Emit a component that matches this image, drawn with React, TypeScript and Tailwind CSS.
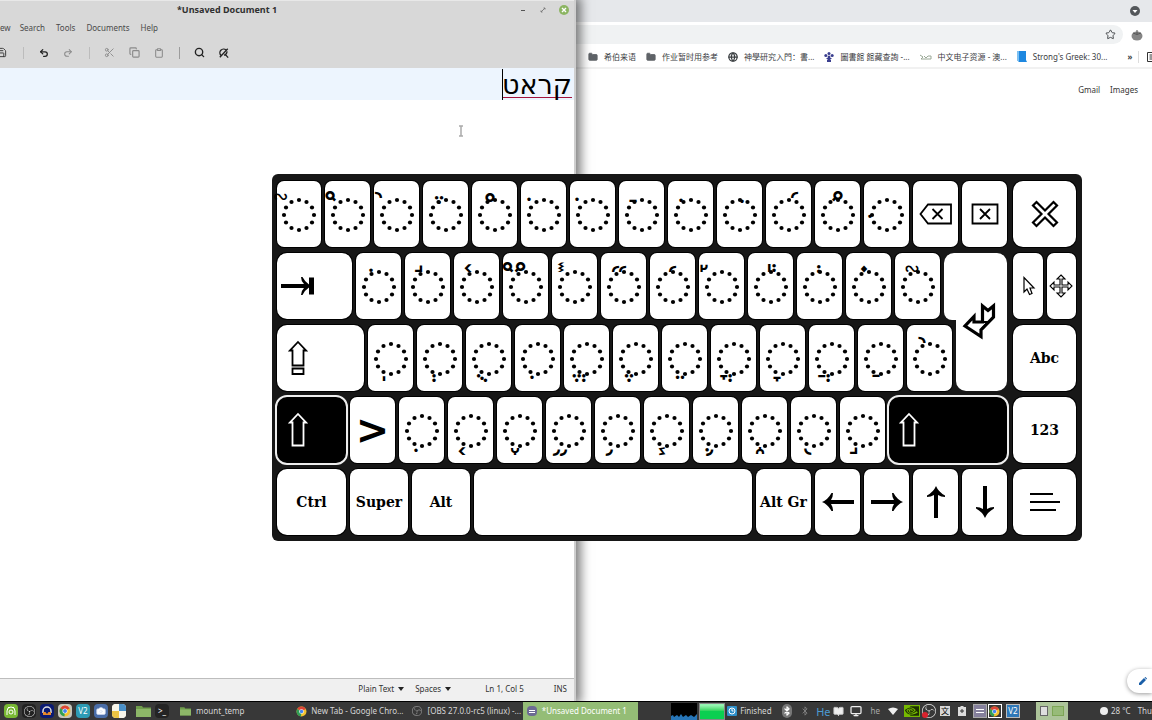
import type { ReactNode } from 'react';
import { SiNvidia, SiObsstudio } from 'react-icons/si';
import {
  Bluetooth,
  BookOpen,
  Camera,
  Clipboard,
  Copy,
  Folder,
  Globe,
  Monitor,
  Redo2,
  Save,
  Scissors,
  Search,
  Star,
  Undo2,
} from 'lucide-react';

type Mark = [char: string, x: number, y: number, name: string];

/* Mark positions are baseline coordinates inside a 44 x 66 key drawing. */
const NUMBER_ROW: Mark[] = [
  ['\u05AE', 16, 48, 'Zinor'],
  ['\u05A9', 16, 49, 'Telisha qetana'],
  ['\u0599', 13, 46, 'Pashta'],
  ['\u0592', 16, 52, 'Segolta'],
  ['\u05AF', 23, 51, 'Masora circle'],
  ['\u05C2', 13, 51, 'Sin dot'],
  ['\u05B9', 12, 51, 'Holam'],
  ['\u05BF', 19, 53, 'Rafe'],
  ['\u05BA', 18, 52, 'Holam haser'],
  ['\u05C1', 30, 53, 'Shin dot'],
  ['\u059D', 30, 46, 'Geresh muqdam'],
  ['\u05A0', 22, 49, 'Telisha gedola'],
  ['\u05BC', 11, 50, 'Dagesh'],
];

const TOP_ROW: Mark[] = [
  ['\u05C4', 20, 53, 'Upper dot'],
  ['\u05AC', 19, 48, 'Iluy'],
  ['\u05AB', 19, 48, 'Ole'],
  ['\u059F', 16, 48, 'Qarney para'],
  ['\u0593', 14, 48, 'Shalshelet'],
  ['\u059E', 23, 48, 'Gershayim'],
  ['\u059C', 24, 48, 'Geresh'],
  ['\u05A1', 10, 48, 'Pazer'],
  ['\u0595', 23, 48, 'Zaqef gadol'],
  ['\u0594', 23, 49, 'Zaqef qatan'],
  ['\u0597', 23, 49, 'Revia'],
  ['\u0598', 22, 48, 'Zarqa'],
];

const HOME_ROW: Mark[] = [
  ['\u05BD', 21, 49, 'Meteg'],
  ['\u05B0', 22, 49, 'Sheva'],
  ['\u05BB', 21, 49, 'Qubuts'],
  ['\u05B4', 22, 47, 'Hiriq'],
  ['\u05B1', 20, 49, 'Hataf segol'],
  ['\u05B6', 21, 49, 'Segol'],
  ['\u05B5', 23, 47, 'Tsere'],
  ['\u05B3', 20, 49, 'Hataf qamats'],
  ['\u05B8', 22, 49, 'Qamats'],
  ['\u05B2', 20, 49, 'Hataf patah'],
  ['\u05B7', 23, 47, 'Patah'],
  ['\u05A8', 20, 47, 'Qadma'],
];

const BOTTOM_ROW: Mark[] = [
  ['\u05C5', 22, 46, 'Lower dot'],
  ['\u05A4', 19, 50, 'Mahapakh'],
  ['\u05A2', 23, 50, 'Atnah hafukh'],
  ['\u05A6', 19, 51, 'Merkha kefula'],
  ['\u05A5', 19, 51, 'Merkha'],
  ['\u05A7', 23, 50, 'Darga'],
  ['\u059B', 22, 51, 'Tevir'],
  ['\u0591', 23, 49, 'Etnahta'],
  ['\u0596', 22, 50, 'Tipeha'],
  ['\u05A3', 19, 50, 'Munah'],
];

const RING = Array.from({ length: 12 }, (_, i) => {
  const angle = (i * Math.PI) / 6;
  return { cx: 22 + 15 * Math.sin(angle), cy: 34 - 15 * Math.cos(angle) };
});

function Key({ label, className, children }: { label: string; className: string; children?: ReactNode }) {
  return (
    <button
      type="button"
      aria-label={label}
      className={`flex h-full shrink-0 items-center justify-center bg-white text-black ring-1 ring-black ${className}`}
    >
      {children}
    </button>
  );
}

function MarkKey({ mark, className = 'w-[45px]' }: { mark: Mark; className?: string }) {
  const [char, x, y, name] = mark;
  return (
    <Key label={name} className={`rounded-[7px] ${className}`}>
      <svg viewBox="0 0 44 66" className="h-[66px] w-11 shrink-0 overflow-visible">
        {RING.map(({ cx, cy }, i) => (
          <circle key={i} cx={cx} cy={cy} r="2.100" />
        ))}
        <text x={x} y={y} textAnchor="middle" className="font-['Liberation_Sans',sans-serif] text-[44px]">
          {'\u00A0' + char}
        </text>
      </svg>
    </Key>
  );
}

function ShiftArrow({ className }: { className: string }) {
  return (
    <svg viewBox="0 0 20 36" className={className} fill="none" stroke="currentColor" strokeWidth="1.8">
      <path d="M10 2 18 10.500H15.500V33.500H4.500V10.500H2Z" />
    </svg>
  );
}

function Arrow({ className }: { className: string }) {
  return (
    <svg viewBox="0 0 34 20" className={className} fill="currentColor">
      <path d="M1 8H24Q22 5 22 1H23.500Q27 7.500 33 10Q27 12.500 23.500 19H22Q22 15 24 12H1Z" />
    </svg>
  );
}

function Keyboard() {
  return (
    <section
      aria-label="On-screen keyboard"
      className="absolute top-[174px] left-[272px] z-30 flex gap-1.5 rounded-md bg-[#171717] pt-[7px] pr-1.5 pb-1.5 pl-[5px] font-['DejaVu_Serif',serif] text-sm font-bold"
    >
      <div className="flex w-[730px] flex-col gap-1.5">
        <div className="flex h-[66px] gap-1">
          {NUMBER_ROW.map((mark, i) => (
            <MarkKey key={mark[3]} mark={mark} className={i === 0 ? 'w-11' : 'w-[45px]'} />
          ))}
          <Key label="Backspace" className="w-[45px] rounded-[7px]">
            <svg viewBox="0 0 34 22" className="h-[22px] w-[34px]" fill="none" stroke="black" strokeWidth="1.8">
              <path d="M9 1.500H32V20.500H9L1.500 11Z" />
              <path d="M13.500 6 23.500 16M23.500 6 13.500 16" />
            </svg>
          </Key>
          <Key label="Delete" className="w-[45px] rounded-[7px]">
            <svg viewBox="0 0 28 22" className="h-[22px] w-7" fill="none" stroke="black" strokeWidth="1.8">
              <path d="M1.500 1.500H26.500V20.500H1.500ZM9 6 19 16M19 6 9 16" />
            </svg>
          </Key>
        </div>
        <div className="flex h-[138px]">
          <div className="flex w-[675px] shrink-0 flex-col gap-1.5">
            <div className="flex h-[66px] gap-1">
              <Key label="Tab" className="w-[75px] rounded-[10px]">
                <svg viewBox="0 0 34 20" className="mr-9 h-5 w-[34px]">
                  <path d="M1 8H24Q21 5 21 1H22.500Q25 6 29 8.500V1.500H34V18.500H29V11.500Q25 14 22.500 19H21Q21 15 24 12H1Z" />
                </svg>
              </Key>
              {TOP_ROW.map((mark) => (
                <MarkKey key={mark[3]} mark={mark} />
              ))}
            </div>
            <div className="flex h-[66px] gap-1">
              <Key label="Caps Lock" className="w-[87px] rounded-[10px]">
                <svg viewBox="0 0 20 36" className="mr-[46px] h-9 w-5" fill="none" stroke="black" strokeWidth="1.8">
                  <path d="M10 2 18 10.500H15.500V25.500H4.500V10.500H2ZM4.500 28.500H15.500V34H4.500Z" />
                </svg>
              </Key>
              {HOME_ROW.map((mark) => (
                <MarkKey key={mark[3]} mark={mark} />
              ))}
            </div>
          </div>
          <button type="button" aria-label="Enter" className="relative -ml-2 flex w-[63px] flex-col items-end">
            <span className="h-[67px] w-full rounded-t-[10px] rounded-bl-lg bg-white" />
            <span className="w-[51px] flex-1 rounded-b-[10px] bg-white" />
            <svg viewBox="0 0 34 38" className="absolute top-[49px] left-[18px] h-[38px] w-[34px]" fill="none" stroke="black" strokeWidth="3.200">
              <path d="M20.500 4 26 8.500 31.500 4V15L19 28V34.500L3 24 12 14.500V20H20.500Z" />
              <path d="M20 20H26L20 27" strokeWidth="2" />
            </svg>
          </button>
        </div>
        <div className="flex h-[66px] gap-1">
          <Key label="Left Shift" className="w-[69px] rounded-[10px] bg-black! text-white! outline-2 outline-[#eee]">
            <ShiftArrow className="mr-7 h-9 w-5" />
          </Key>
          <Key label="Greater than" className="w-[45px] rounded-[7px] font-['DejaVu_Sans',sans-serif] text-[40px] leading-none font-bold">
            &gt;
          </Key>
          {BOTTOM_ROW.map((mark) => (
            <MarkKey key={mark[3]} mark={mark} />
          ))}
          <Key label="Right Shift" className="w-[118px] rounded-[10px] bg-black! text-white! outline-2 outline-[#eee]">
            <ShiftArrow className="mr-[78px] h-9 w-5" />
          </Key>
        </div>
        <div className="flex h-[66px] gap-1">
          <Key label="Control" className="w-[69px] rounded-[10px]">Ctrl</Key>
          <Key label="Super" className="w-[58px] rounded-lg">Super</Key>
          <Key label="Alt" className="w-[58px] rounded-lg">Alt</Key>
          <Key label="Space" className="w-[278px] rounded-lg" />
          <Key label="Alt Gr" className="w-[55px] rounded-lg whitespace-nowrap">Alt Gr</Key>
          <Key label="Left" className="w-[45px] rounded-[7px]"><Arrow className="h-5 w-[34px] rotate-180" /></Key>
          <Key label="Right" className="w-[45px] rounded-[7px]"><Arrow className="h-5 w-[34px]" /></Key>
          <Key label="Up" className="w-[45px] rounded-[7px]"><Arrow className="h-5 w-[34px] shrink-0 -rotate-90" /></Key>
          <Key label="Down" className="w-[45px] rounded-[7px]"><Arrow className="h-5 w-[34px] shrink-0 rotate-90" /></Key>
        </div>
      </div>
      <div className="grid w-[63px] grid-rows-[repeat(5,66px)] gap-1.5">
        <Key label="Close keyboard" className="rounded-[10px]">
          <svg viewBox="0 0 28 28" className="h-7 w-7" fill="none" stroke="black" strokeWidth="2.200">
            <path d="M5.500 2 14 10.500 22.500 2 26 5.500 17.500 14 26 22.500 22.500 26 14 17.500 5.500 26 2 22.500 10.500 14 2 5.500Z" />
          </svg>
        </Key>
        <div className="flex gap-1">
          <Key label="Click helper" className="flex-1 rounded-[7px]">
            <svg viewBox="0 0 14 20" className="ml-0.5 h-5 w-3.5" fill="none" stroke="black" strokeWidth="1.200">
              <path d="M2 1.500V16L5 13 7.500 18.500 10 17.500 8 12H12Z" />
            </svg>
          </Key>
          <Key label="Move keyboard" className="flex-1 rounded-[7px]">
            <svg viewBox="0 0 24 24" className="h-6 w-6" fill="none" stroke="black" strokeWidth="1.100">
              <path d="M12 1 16 5H13V11H19V8L23 12 19 16V13H13V19H16L12 23 8 19H11V13H5V16L1 12 5 8V11H11V5H8Z" />
            </svg>
          </Key>
        </div>
        <Key label="Abc" className="rounded-[10px]">Abc</Key>
        <Key label="123" className="rounded-[10px]">123</Key>
        <Key label="Menu" className="rounded-[10px]">
          <svg viewBox="0 0 30 20" className="h-5 w-[30px]" stroke="black" strokeWidth="2">
            <path d="M0 2H23M0 10H30M0 18H26" />
          </svg>
        </Key>
      </div>
    </section>
  );
}

function Editor() {
  return (
    <section className="relative z-10 flex w-1/2 shrink-0 flex-col border-r-2 border-[#cfcfcf] bg-white shadow-[2px_0_10px_3px_rgba(0,0,0,0.5)]">
      <div className="flex h-[68px] flex-col border-t border-[#e8e8e8] bg-[#d8d8d8] text-[#4a4a4a]">
        <header className="relative flex h-[18px] items-center justify-end gap-3 pr-[5px]">
          <h1 className="absolute inset-x-0 pr-[120px] text-center text-[9px] font-bold text-[#303030]">*Unsaved Document 1</h1>
          <button type="button" aria-label="Minimize" className="relative flex h-2 w-2 items-center justify-center">
            <span className="h-px w-1 bg-[#555]" />
          </button>
          <button type="button" aria-label="Maximize" className="relative">
            <svg viewBox="0 0 8 8" className="h-2 w-2" fill="none" stroke="#777" strokeWidth="0.900">
              <path d="M4.500 2H6V3.500M6 2 2 6M2 4.500V6H3.500" />
            </svg>
          </button>
          <button type="button" aria-label="Close" className="relative">
            <svg viewBox="0 0 10 10" className="h-2.5 w-2.5">
              <circle cx="5" cy="5" r="5" fill="#8cb562" />
              <path d="M3 3 7 7M7 3 3 7" stroke="white" strokeWidth="1.400" />
            </svg>
          </button>
        </header>
        <nav className="flex h-[18px] items-center gap-[11px] text-[8px]">
          <a href="#view" className="-mr-0.5">ew</a>
          <a href="#search">Search</a>
          <a href="#tools">Tools</a>
          <a href="#documents">Documents</a>
          <a href="#help">Help</a>
        </nav>
        <div className="flex flex-1 items-center text-[#8a8a8a]">
          <button type="button" aria-label="Save" className="-ml-1 text-[#333]">
            <Save size={11} strokeWidth={2} />
          </button>
          <span className="ml-4 h-3 w-px bg-[#bcbcbc]" />
          <button type="button" aria-label="Undo" className="ml-[15px] text-[#222]"><Undo2 size={10} strokeWidth={3} /></button>
          <button type="button" aria-label="Redo" className="ml-3.5"><Redo2 size={10} strokeWidth={2.5} /></button>
          <span className="ml-4 h-3 w-px bg-[#bcbcbc]" />
          <button type="button" aria-label="Cut" className="ml-3.5"><Scissors size={11} strokeWidth={2} /></button>
          <button type="button" aria-label="Copy" className="ml-3.5"><Copy size={11} strokeWidth={2.5} /></button>
          <button type="button" aria-label="Paste" className="ml-3.5"><Clipboard size={10} strokeWidth={2.5} /></button>
          <span className="ml-[15px] h-3 w-px bg-[#9c9c9c]" />
          <button type="button" aria-label="Find" className="ml-3.5 text-[#222]"><Search size={11} strokeWidth={3} /></button>
          <button type="button" aria-label="Find and replace" className="ml-3.5 text-[#222]">
            <svg viewBox="0 0 12 12" className="h-2.5 w-2.5" fill="none" stroke="currentColor" strokeWidth="1.600">
              <path d="M2.500 9A4.200 4.200 0 0 1 8.500 2.500M9.500 4A4 4 0 0 1 6 8.500M7 7 11 11.500M1 11 10.500 1" />
            </svg>
          </button>
        </div>
      </div>
      <div className="relative flex flex-1">
        <textarea
          aria-label="Document"
          dir="rtl"
          spellCheck={false}
          defaultValue="קראט"
          className="w-full resize-none bg-[linear-gradient(#edf5fe_0_32px,#ffffff_32px)] pt-px pr-0.5 font-['DejaVu_Sans',sans-serif] text-[27px] leading-8 text-black underline decoration-[#a3123c] decoration-1 underline-offset-[3px] outline-none [text-decoration-skip-ink:none]"
        />
        <span className="absolute top-px right-[71px] h-[31px] w-px bg-black" />
        <svg viewBox="0 0 6 12" className="absolute top-[57px] right-[110px] h-3 w-1.5" fill="none" stroke="#aaa" strokeWidth="1.500">
          <path d="M1 1H5M3 1V11M1 11H5" />
        </svg>
      </div>
      <footer className="flex h-[23px] items-center justify-end border-t border-[#bdbdbd] bg-[#f0f0f0] pr-[7px] pb-0.5 text-[8px] text-[#333]">
        <button type="button" className="flex items-center gap-1">Plain Text <Caret /></button>
        <button type="button" className="ml-[11px] flex items-center gap-1">Spaces <Caret /></button>
        <span className="ml-[34px]">Ln 1, Col 5</span>
        <span className="ml-[30px]">INS</span>
      </footer>
    </section>
  );
}

function Caret() {
  return (
    <svg viewBox="0 0 6 4" className="h-1 w-1.5">
      <path d="M0 0H6L3 4Z" fill="#222" />
    </svg>
  );
}

function Bookmark({ icon, text }: { icon: ReactNode; text: string }) {
  return (
    <a href="#bookmark" className="flex shrink-0 items-center gap-1.5 whitespace-nowrap">
      {icon}
      {text}
    </a>
  );
}

function Browser() {
  const folder = <Folder size={10} fill="#5f6368" stroke="#5f6368" />;
  return (
    <section className="flex min-w-0 flex-1 flex-col bg-white text-[#3c4043]">
      <div className="flex h-[22px] items-center justify-end bg-[#e6e8eb] pr-3">
        <button type="button" aria-label="Search tabs">
          <svg viewBox="0 0 10 10" className="h-2.5 w-2.5">
            <circle cx="5" cy="5" r="5" fill="#54575b" />
            <path d="M2.500 4H7.500L5 7Z" fill="white" />
          </svg>
        </button>
      </div>
      <div className="flex h-[25px] items-center gap-2 pr-[9px]">
        <div className="flex h-[19px] flex-1 items-center justify-end rounded-r-full bg-[#f0f2f3] pr-[7px]">
          <button type="button" aria-label="Bookmark this tab"><Star size={11} strokeWidth={2} /></button>
        </div>
        <button type="button" aria-label="Extension">
          <svg viewBox="0 0 12 12" className="h-3 w-3">
            <ellipse cx="6" cy="7" rx="5.500" ry="4.500" fill="#858585" />
            <path d="M2 4 6 5.500 10 4M6 1V5" stroke="#555" fill="none" />
          </svg>
        </button>
      </div>
      <nav className="flex h-[22px] items-center gap-2.5 overflow-hidden border-b-2 border-[#f1f1f1] pb-px pl-3 text-[8px]">
        <Bookmark icon={folder} text="希伯来语" />
        <Bookmark icon={folder} text="作业暂时用参考" />
        <Bookmark icon={<Globe size={10} strokeWidth={3} />} text="神學研究入門：書..." />
        <Bookmark
          icon={
            <svg viewBox="0 0 10 10" className="h-2.5 w-2.5" fill="#3b3f8f">
              <circle cx="5" cy="1.500" r="1.500" />
              <circle cx="1.800" cy="3.500" r="1.500" />
              <circle cx="8.200" cy="3.500" r="1.500" />
              <circle cx="5" cy="5" r="1.500" />
              <path d="M2 6H8L6 8H7V10H3V8H4Z" />
            </svg>
          }
          text="圖書館 館藏查詢 -..."
        />
        <Bookmark
          icon={
            <svg viewBox="0 0 12 6" className="h-1.5 w-3" fill="none" stroke="#9aa896">
              <path d="M0 1 3 3 1 5H11V2H8L6 4 4 2" />
            </svg>
          }
          text="中文电子资源 - 澳..."
        />
        <Bookmark
          icon={
            <svg viewBox="0 0 10 11" className="h-[11px] w-2.5">
              <path d="M0 0H9V9L10 11H2L0 9Z" fill="#1e88e0" />
              <path d="M0 0H2V11L0 9Z" fill="#7cc0f2" />
            </svg>
          }
          text="Strong's Greek: 30..."
        />
        <span className="ml-2.5 font-bold">»</span>
        <span className="-ml-1 h-3 w-px shrink-0 bg-[#ddd]" />
        <svg viewBox="0 0 8 10" className="-ml-0.5 h-2.5 w-2 shrink-0" fill="none" stroke="#333">
          <path d="M8 .5H.5V9.500H8M2.500 3H8M2.500 5H8M2.500 7H8" />
        </svg>
      </nav>
      <div className="flex justify-end gap-2.5 pt-[15px] pr-3.5 text-[8px] leading-3 text-[#333]">
        <a href="#gmail">Gmail</a>
        <a href="#images">Images</a>
      </div>
      <div className="mt-auto flex justify-end overflow-hidden pt-2 pb-2">
        <button type="button" aria-label="Customize" className="flex h-6 w-[25px] items-center rounded-l-full bg-white pl-3 shadow-[0_1px_4px_rgba(0,0,0,0.4)]">
          <svg viewBox="0 0 8 8" className="h-2 w-2">
            <path d="M0 8V6L5 1 7 3 2 8ZM5.500.5 6.500 0 8 1.500 7.500 2.500Z" fill="#1a5fa8" />
          </svg>
        </button>
      </div>
    </section>
  );
}

function Chrome({ className }: { className: string }) {
  return (
    <svg viewBox="0 0 20 20" className={className}>
      <circle cx="10" cy="10" r="9" fill="#f2c230" />
      <path d="M10 10 2.200 5.500A9 9 0 0 1 17.800 5.500Z" fill="#dc4437" />
      <path d="M10 10 2.200 5.500A9 9 0 0 0 9 19Z" fill="#2f9e56" />
      <circle cx="10" cy="10" r="4.200" fill="white" />
      <circle cx="10" cy="10" r="3.200" fill="#4384f0" />
    </svg>
  );
}

function Launcher({ label, className, children }: { label: string; className: string; children: ReactNode }) {
  return (
    <button type="button" aria-label={label} className={`flex h-3.5 w-3.5 shrink-0 items-center justify-center rounded-sm ${className}`}>
      {children}
    </button>
  );
}

function FolderGlyph({ className }: { className: string }) {
  return (
    <svg viewBox="0 0 15 12" className={className}>
      <path d="M0 1H6L7 2.500H15V12H0Z" fill="#6f9c4b" />
      <path d="M0 4H15V12H0Z" fill="#8db768" />
    </svg>
  );
}

function Taskbar() {
  return (
    <footer className="relative z-20 flex h-[19px] shrink-0 items-center overflow-hidden border-t border-black bg-[#383838] pl-1 text-[8px] whitespace-nowrap text-[#d6d6d6]">
      <div className="flex items-center gap-1">
        <Launcher label="Android Studio" className="bg-[#78b833]">
          <svg viewBox="0 0 10 10" className="h-2.5 w-2.5" fill="none" stroke="white">
            <path d="M1 9V5A4 4 0 0 1 9 5V9M2 1 3 2M8 1 7 2" />
            <circle cx="5" cy="6" r="2" />
          </svg>
        </Launcher>
        <Launcher label="OBS Studio" className="bg-[#222]"><SiObsstudio size={11} color="#e8e8e8" /></Launcher>
        <Launcher label="Audacity" className="bg-[#0b1a72]">
          <svg viewBox="0 0 12 12" className="h-3 w-3" fill="none">
            <path d="M2 8V6A4 4 0 0 1 10 6V8" stroke="#ddd" strokeWidth="1.500" />
            <path d="M2 7H4.500L6 9 7.500 7H10V10H2Z" fill="#e88a2a" />
          </svg>
        </Launcher>
        <Launcher label="Google Chrome" className="bg-[#c5c5bb]"><Chrome className="h-3 w-3" /></Launcher>
        <Launcher label="VNC Viewer" className="bg-[#2d9bb4] text-[8px] text-white">V2</Launcher>
        <Launcher label="Screenshot" className="bg-[#4a6da7]"><Camera size={10} fill="white" color="#dde6f5" /></Launcher>
        <Launcher label="Workspaces" className="overflow-hidden bg-white">
          <span className="grid h-full w-full grid-cols-2">
            <span className="bg-[#f7f5ea]" />
            <span className="bg-[#4a90c8]" />
            <span className="bg-[#edc443]" />
            <span className="bg-[#f7f5ea]" />
          </span>
        </Launcher>
      </div>
      <button type="button" aria-label="Files" className="ml-2.5"><FolderGlyph className="h-3 w-[15px]" /></button>
      <Launcher label="Terminal" className="ml-1 bg-[#242424] text-[8px] text-white">&gt;_</Launcher>
      <button type="button" className="ml-[11px] flex w-[117px] items-center gap-[5px]">
        <FolderGlyph className="h-2.5 w-[11px]" />
        mount_temp
      </button>
      <button type="button" className="flex w-[116px] items-center gap-1">
        <Chrome className="h-[11px] w-[11px]" />
        New Tab - Google Chro...
      </button>
      <button type="button" className="flex w-[112px] items-center gap-1.5">
        <SiObsstudio size={10} color="#aaa" />
        [OBS 27.0.0-rc5 (linux) -...
      </button>
      <button type="button" className="flex h-full w-[116px] items-center gap-[5px] bg-[#94bd76] pl-1 text-white">
        <span className="flex h-2.5 w-2.5 flex-col justify-center gap-px rounded-sm bg-[#6c6a93] px-0.5">
          <span className="h-px bg-white" />
          <span className="h-px bg-white" />
        </span>
        *Unsaved Document 1
      </button>
      <svg viewBox="0 0 26 17" className="ml-[33px] h-[17px] w-[26px] shrink-0 bg-black">
        <path d="M0 17V13L2 12 3 14 6 12 8 14 10 11 12 14 15 12 17 14 20 12 23 14 26 11V17Z" fill="#2776b8" />
      </svg>
      <span className="ml-0.5 h-[17px] w-[26px] shrink-0 border border-[#888] bg-linear-to-b from-[#93f5b0] from-10% to-[#0bcf51] to-50%" />
      <span className="ml-0.5 flex w-[55px] shrink-0 items-center gap-[3px]">
        <svg viewBox="0 0 10 10" className="h-2.5 w-2.5">
          <rect width="10" height="10" rx="1" fill="#2d8fc9" />
          <circle cx="5" cy="5" r="3" fill="none" stroke="white" />
          <path d="M5 3V5H6.500" fill="none" stroke="white" />
        </svg>
        Finished
      </span>
      <span className="flex h-3.5 w-2.5 shrink-0 items-center justify-center rounded-full bg-[#777]">
        <Bluetooth size={10} strokeWidth={3} color="#fff" />
      </span>
      <Bluetooth size={10} strokeWidth={2} color="#888" className="ml-2 shrink-0" />
      <span className="ml-1.5 text-[11px] leading-none text-[#4c9ad0]">He</span>
      <BookOpen size={11} fill="#eee" color="#ccc" className="ml-[3px] shrink-0" />
      <Monitor size={12} strokeWidth={2.5} color="#eee" className="ml-1.5 shrink-0" />
      <span className="ml-2 text-[#aaa]">he</span>
      <svg viewBox="0 0 10 8" className="ml-2 h-2 w-2.5 shrink-0"><path d="M0 2Q5-1 10 2L5 8Z" fill="#eee" /></svg>
      <span className="ml-1.5 flex h-3 w-4 shrink-0 items-center justify-center bg-[#76b900]"><SiNvidia size={14} color="#1d3000" /></span>
      <span className="relative ml-0.5 shrink-0">
        <SiObsstudio size={14} color="#eee" />
        <span className="absolute bottom-0 left-0 h-1.5 w-1.5 rounded-full bg-[#d9232e]" />
      </span>
      <span className="ml-1 flex h-2.5 w-2.5 shrink-0 items-center justify-center bg-[#d8d8d8] text-[8px] text-black">文</span>
      <svg viewBox="0 0 8 10" className="ml-2 h-2.5 w-2 shrink-0"><path d="M0 1H2.500V0H5.500V1H8V10H0Z" fill="#ddd" /><path d="M4 3V7M2 5H6" stroke="#333" /></svg>
      <span className="ml-[7px] flex h-3.5 w-3.5 shrink-0 items-center justify-center border border-[#aaa] bg-[#85809c]"><span className="h-1 w-2 border-y border-white" /></span>
      <span className="ml-px flex h-3.5 w-3.5 shrink-0 items-center justify-center border border-white"><Chrome className="h-[11px] w-[11px]" /></span>
      <span className="ml-1 flex h-3.5 w-3.5 shrink-0 items-center justify-center border border-[#bbb] bg-[#2f78b8] text-white">V2</span>
      <span className="ml-4 flex h-full w-8 shrink-0 items-center gap-1 bg-[#adc49a] px-1">
        <span className="h-2.5 w-2 border border-[#666] bg-[#dedede]" />
        <span className="h-2.5 w-3 border border-[#7da655] bg-[#97bb78]" />
      </span>
      <span className="ml-8 h-2 w-2 shrink-0 rounded-full bg-[#eee]" />
      <span className="ml-[3px]">28 °C</span>
      <span className="ml-[7px]">Thu</span>
    </footer>
  );
}

export default function App() {
  return (
    <div className="relative flex h-screen min-h-[560px] flex-col overflow-hidden bg-white font-['Noto_Sans','Noto_Sans_CJK_SC',sans-serif]">
      <main className="flex min-h-0 flex-1 overflow-hidden">
        <Editor />
        <Browser />
      </main>
      <Taskbar />
      <Keyboard />
    </div>
  );
}
